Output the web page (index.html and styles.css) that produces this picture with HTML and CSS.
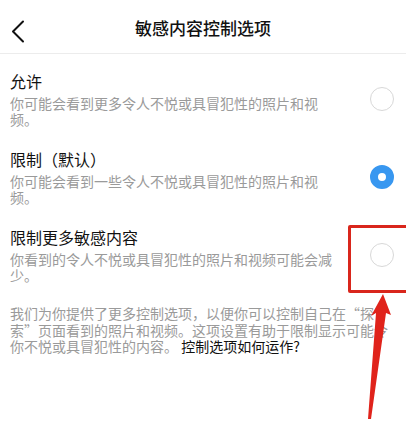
FILE: index.html
```html
<!DOCTYPE html>
<html lang="zh-CN">
<head>
<meta charset="utf-8">
<link rel="stylesheet" href="styles.css">
</head>
<body>
<div class="page">
  <header class="header">
    <svg class="back" width="14" height="24" viewBox="0 0 14 24"><path d="M12 1.5 L2 11.5 L12 21.5" fill="none" stroke="#111" stroke-width="2" stroke-linecap="round" stroke-linejoin="round"/></svg>
    <h1 class="title">敏感内容控制选项</h1>
  </header>
  <div class="options">
    <div class="option">
      <div class="text">
        <div class="opt-title">允许</div>
        <div class="opt-desc">你可能会看到更多令人不悦或具冒犯性的照片和视频。</div>
      </div>
      <span class="radio"></span>
    </div>
    <div class="option">
      <div class="text">
        <div class="opt-title">限制（默认）</div>
        <div class="opt-desc">你可能会看到一些令人不悦或具冒犯性的照片和视频。</div>
      </div>
      <span class="radio checked"></span>
    </div>
    <div class="option">
      <div class="text">
        <div class="opt-title">限制更多敏感内容</div>
        <div class="opt-desc">你看到的令人不悦或具冒犯性的照片和视频可能会减少。</div>
      </div>
      <span class="radio"></span>
    </div>
  </div>
  <p class="footer">我们为你提供了更多控制选项，以便你可以控制自己在“探索”页面看到的照片和视频。这项设置有助于限制显示可能令你不悦或具冒犯性的内容。 <span class="link">控制选项如何运作?</span></p>
  <div class="mark-box"></div>
  <svg class="mark-arrow" width="406" height="422" viewBox="0 0 406 422"><polygon points="383,294 391,315 386,313 371,419 368,419 376,313 371,316" fill="#e0231b"/></svg>
</div>
</body>
</html>
```

FILE: styles.css
```css
* { box-sizing: border-box; }
html, body { margin: 0; padding: 0; background: #fff; }
body {
  font-family: "Noto Sans CJK SC", "Noto Sans", sans-serif;
  color: #1a1a1a;
}
.page {
  position: relative;
  width: 406px;
  height: 422px;
  overflow: hidden;
}
.header {
  position: relative;
  height: 54px;
  border-bottom: 1px solid #ececec;
  display: flex;
  align-items: center;
  justify-content: center;
}
.back {
  position: absolute;
  left: 11px;
  top: 20px;
}
.title {
  margin: 0;
  font-size: 17px;
  font-weight: 500;
  line-height: 24px;
  color: #111;
  padding-top: 2px;
}
.options {
  padding: 16px 0 0 10px;
  display: flex;
  flex-direction: column;
  gap: 21px;
}
.option {
  display: flex;
  align-items: center;
  gap: 30px;
  padding-right: 12px;
}
.text { flex: 1; }
.opt-title {
  font-size: 16px;
  line-height: 22px;
  color: #111;
  margin-bottom: 3px;
}
.opt-desc {
  font-size: 14px;
  line-height: 16px;
  color: #9a9a9a;
}
.radio {
  flex: none;
  width: 24px;
  height: 24px;
  border-radius: 50%;
  border: 1.5px solid #d8d8d8;
  background: #fff;
}
.radio.checked {
  border: 8px solid #3897f0;
}
.footer {
  margin: 22px 12px 0 10px;
  font-size: 14px;
  line-height: 16.5px;
  color: #9a9a9a;
}
.link { color: #111; }
.mark-box {
  position: absolute;
  left: 348px;
  top: 225px;
  width: 64px;
  height: 68px;
  border: 3px solid #d9261c;
  border-radius: 2px;
}
.mark-arrow {
  position: absolute;
  left: 0;
  top: 0;
}
```
